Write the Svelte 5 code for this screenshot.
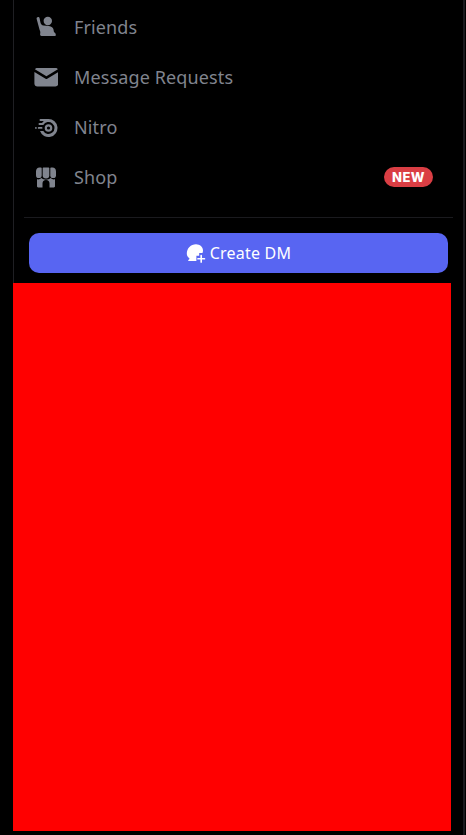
<script>
  const items = [
    { key: 'friends', label: 'Friends' },
    { key: 'requests', label: 'Message Requests' },
    { key: 'nitro', label: 'Nitro' },
    { key: 'shop', label: 'Shop', badge: 'NEW' }
  ];
</script>

<div class="page">
  <aside class="sidebar">
    <div class="top">
      <nav class="nav">
        {#each items as item}
          <div class="row">
            <span class="icon">
              {#if item.key === 'friends'}
                <svg width="24" height="24" viewBox="0 0 24 24"><circle cx="13.8" cy="6" r="4.200" fill="currentColor"/><path fill="currentColor" d="M2.600 3.800c-.1-1 .6-1.800 1.500-1.800.8 0 1.400.5 1.500 1.300l.8 4c.3 1.700 1.500 3 3.100 3.300l5.400.4c2.600.2 4.300 1.800 4.600 3.600l.4 2.200c.1.500.9.900 1.400 1.400.4.500.5 1.200.5 1.700 0 .6-.4 1.100-1 1.100H7.500c-.8 0-1.300-.5-1.400-1.200-.1-.7.2-1.500.2-2.400 0-1-.4-1.600-.8-2.800z"/></svg>
              {:else if item.key === 'requests'}
                <svg width="24" height="24" viewBox="-.4 .5 24 24"><path fill="currentColor" d="M3 3.500h18c1.100 0 2 .5 2.500 1.300L12 11.800.5 4.800C1 4 1.900 3.500 3 3.500z"/><path fill="currentColor" d="M0 7.500v11.500c0 1.700 1.300 3 3 3h18c1.700 0 3-1.300 3-3V7.500l-11.200 6.800c-.5.300-1.100.300-1.600 0z"/></svg>
              {:else if item.key === 'nitro'}
                <svg width="24" height="24" viewBox="0 0 24 24"><path fill="currentColor" fill-rule="evenodd" d="M6.500 4h8a9 9 0 1 1-8.500 12h3.300a6 6 0 1 0 0-6H5.500a1 1 0 0 1 0-2h2.600c.3-.5.700-.9 1.100-1.300L9.700 6H6.500a1 1 0 0 1 0-2z"/><path fill="currentColor" fill-rule="evenodd" d="M14.500 9.200a3.800 3.800 0 1 1 0 7.600 3.800 3.800 0 0 1 0-7.600zm0 2.200a1.600 1.600 0 1 0 0 3.200 1.600 1.600 0 0 0 0-3.200z"/><rect x="1" y="12" width="1.800" height="1.800" rx=".9" fill="currentColor"/><rect x="3.800" y="12" width="4.700" height="1.800" rx=".9" fill="currentColor"/></svg>
              {:else}
                <svg width="24" height="24" viewBox="0 0 24 24"><path fill="currentColor" d="M5.500 2.500h1.400c.5 0 .8.300.8.800v6.900a2.800 2.800 0 0 1-5.700 0V6.200c0-2 1.500-3.700 3.500-3.700z"/><path fill="currentColor" d="M9.700 2.500h4.600c.6 0 1 .4 1 1v6.700a3.300 3.300 0 0 1-6.600 0V3.500c0-.6.400-1 1-1z"/><path fill="currentColor" d="M17.100 2.500h1.400c2 0 3.500 1.700 3.500 3.700v4a2.800 2.800 0 0 1-5.700 0V3.300c0-.5.300-.8.800-.8z"/><path fill="currentColor" d="M3 14.300c1.600.4 3.200 0 4.400-1.200 1.200 1.100 2.900 1.700 4.600 1.700s3.400-.6 4.600-1.700c1.200 1.200 2.800 1.600 4.400 1.200v7c0 .7-.5 1.200-1.200 1.200h-4.300v-3.900a3.500 3.500 0 0 0-7 0v3.900H4.200c-.7 0-1.200-.5-1.200-1.200z"/></svg>
              {/if}
            </span>
            <span class="label">{item.label}</span>
            {#if item.badge}
              <span class="badge">{item.badge}</span>
            {/if}
          </div>
        {/each}
      </nav>
      <div class="separator"></div>
      <button class="create">
        <svg width="20" height="20" viewBox="0 0 20 20"><path fill="currentColor" d="M10 1.200c3.900 0 7 2.800 7 6.300 0 .9-.2 1.700-.5 2.500h-3.300v2.700h-2.800V18H2.800c-.6 0-.8-.6-.4-1l.8-.8c.3-.3.300-.6.100-.9C1.500 14 .8 12.300 .8 10.500 .8 5.400 4.800 1.200 10 1.200z"/><rect x="14.400" y="11.800" width="1.600" height="8" rx=".6" fill="currentColor"/><rect x="11.200" y="15" width="8" height="1.600" rx=".6" fill="currentColor"/></svg>
        <span>Create DM</span>
      </button>
    </div>
    <div class="panel"></div>
  </aside>
  <div class="edge"></div>
</div>

<style>
  :global(body) {
    margin: 0;
    background: #000;
  }
  .page {
    width: 466px;
    height: 835px;
    display: flex;
    background: #000;
    font-family: "Noto Sans", "Open Sans", sans-serif;
    overflow: hidden;
  }
  .sidebar {
    margin-left: 13px;
    width: 438px;
    display: flex;
    flex-direction: column;
    flex: none;
  }
  .top {
    border-left: 1px solid #1f1f23;
    height: 283px;
    box-sizing: border-box;
    padding-top: 2px;
    display: flex;
    flex-direction: column;
  }
  .nav {
    display: flex;
    flex-direction: column;
    height: 200px;
  }
  .row {
    height: 50px;
    display: flex;
    align-items: center;
    padding-left: 20px;
    padding-right: 18px;
    color: #80848e;
  }
  .icon {
    width: 24px;
    height: 24px;
    display: flex;
    color: #80848e;
    margin-right: 16px;
  }
  .label {
    font-size: 18px;
    font-weight: 400;
    letter-spacing: 0.13px;
    line-height: 24px;
    flex: 1;
  }
  .badge {
    width: 49px;
    height: 20px;
    border-radius: 10px;
    background: #da3e44;
    color: #fff;
    font-family: "Inter", sans-serif;
    font-size: 13px;
    font-weight: 800;
    line-height: 20px;
    text-align: center;
    letter-spacing: 0.5px;
  }
  .separator {
    height: 1px;
    background: #1a1a1e;
    margin: 15px -2px 15px 10px;
  }
  .create {
    width: 419px;
    height: 40px;
    margin-left: 15px;
    border: 0;
    padding: 0;
    border-radius: 10px;
    background: #5865f2;
    color: #fff;
    display: flex;
    align-items: center;
    justify-content: center;
    gap: 4px;
    font-family: inherit;
    font-size: 16px;
    font-weight: 400;
    letter-spacing: 0.2px;
  }
  .panel {
    height: 548px;
    background: #f00;
  }
  .edge {
    margin-left: 12px;
    width: 2px;
    height: 835px;
    background: #1a1a1e;
  }
</style>
